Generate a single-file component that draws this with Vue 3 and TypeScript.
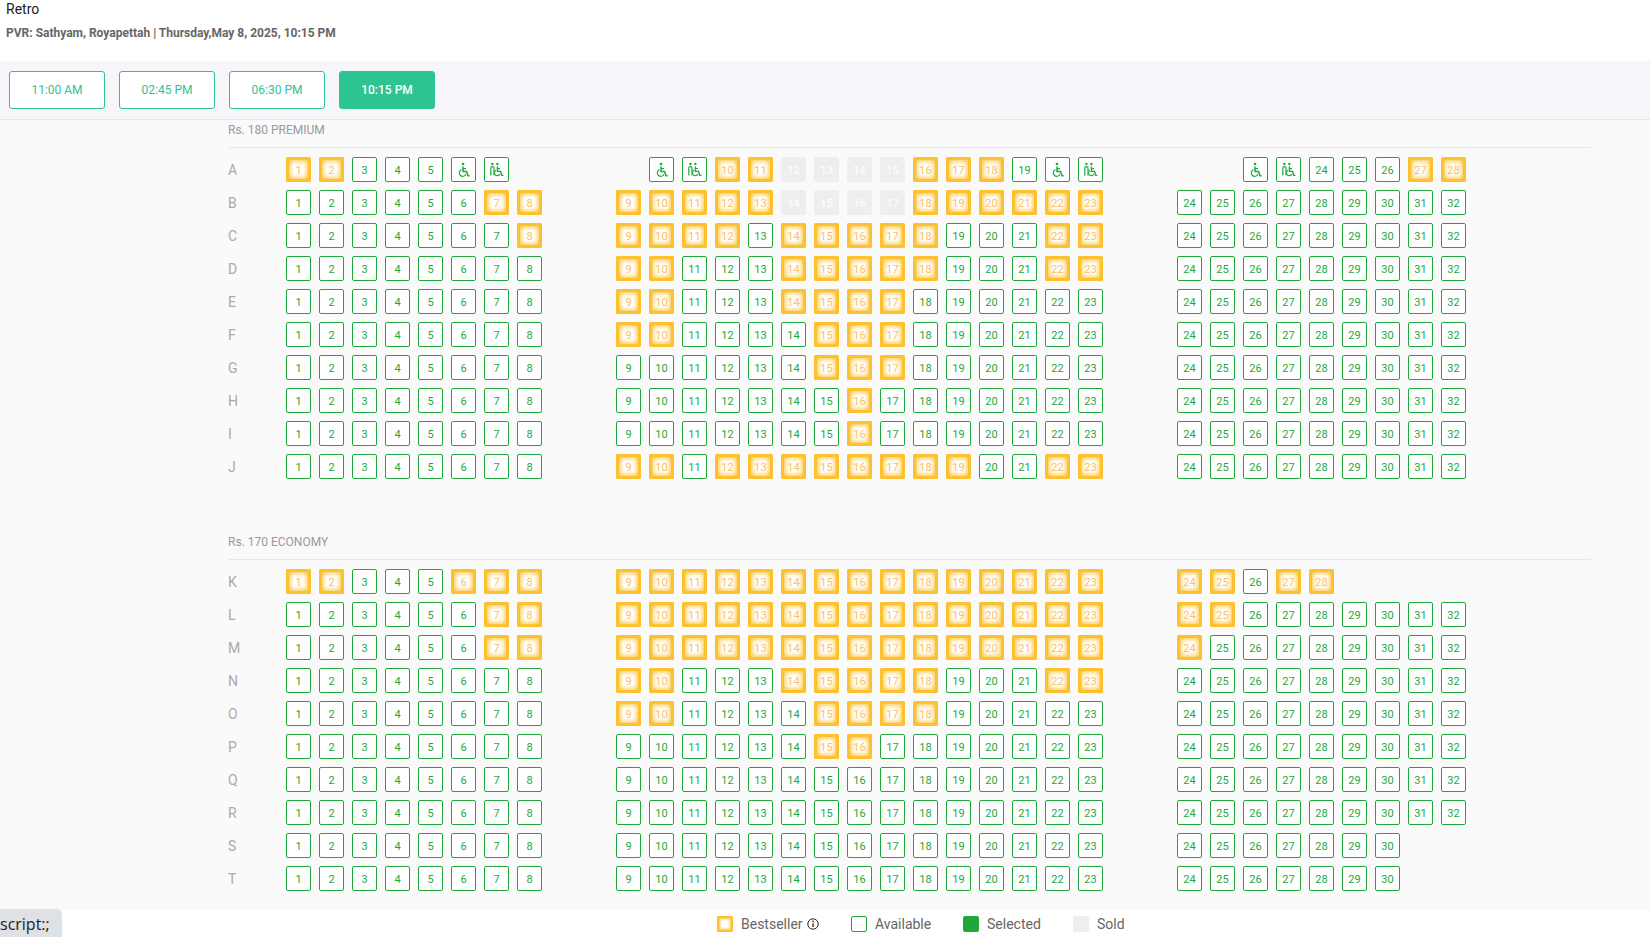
<script setup lang="ts">
type SeatKind = 'available' | 'best' | 'sold' | 'wheel' | 'companion' | 'gap'

interface Seat {
  label: string
  kind: SeatKind
}

interface Row {
  name: string
  blocks: Seat[][]
}

// inclusive [from, to] ranges of seat numbers
type Ranges = [number, number][]

interface RowSpec {
  name: string
  best?: Ranges
  sold?: Ranges
  last?: number
}

const times = ['11:00 AM', '02:45 PM', '06:30 PM', '10:15 PM']

function inRanges(n: number, ranges: Ranges = []) {
  return ranges.some(([a, b]) => n >= a && n <= b)
}

function splitBlocks(seats: Seat[]): Seat[][] {
  return [seats.slice(0, 8), seats.slice(8, 23), seats.slice(23)]
}

function buildRow(spec: RowSpec): Row {
  const seats: Seat[] = []
  const last = spec.last ?? 32
  for (let n = 1; n <= last; n++) {
    let kind: SeatKind = 'available'
    if (inRanges(n, spec.best)) kind = 'best'
    if (inRanges(n, spec.sold)) kind = 'sold'
    seats.push({ label: String(n), kind })
  }
  return { name: spec.name, blocks: splitBlocks(seats) }
}

// row A has wheelchair bays, so its numbers do not follow the column position
function buildRowA(): Row {
  const b = (n: number): Seat => ({ label: String(n), kind: 'best' })
  const a = (n: number): Seat => ({ label: String(n), kind: 'available' })
  const s = (n: number): Seat => ({ label: String(n), kind: 'sold' })
  const gap: Seat = { label: '', kind: 'gap' }
  const wheel: Seat = { label: '', kind: 'wheel' }
  const comp: Seat = { label: '', kind: 'companion' }
  const seats = [
    b(1), b(2), a(3), a(4), a(5), wheel, comp, gap,
    gap, wheel, comp, b(10), b(11), s(12), s(13), s(14), s(15), b(16), b(17), b(18), a(19), wheel, comp,
    gap, gap, wheel, comp, a(24), a(25), a(26), b(27), b(28)
  ]
  return { name: 'A', blocks: splitBlocks(seats) }
}

const premium: Row[] = [
  buildRowA(),
  buildRow({ name: 'B', best: [[7, 13], [18, 23]], sold: [[14, 17]] }),
  buildRow({ name: 'C', best: [[8, 12], [14, 18], [22, 23]] }),
  buildRow({ name: 'D', best: [[9, 10], [14, 18], [22, 23]] }),
  buildRow({ name: 'E', best: [[9, 10], [14, 17]] }),
  buildRow({ name: 'F', best: [[9, 10], [15, 17]] }),
  buildRow({ name: 'G', best: [[15, 17]] }),
  buildRow({ name: 'H', best: [[16, 16]] }),
  buildRow({ name: 'I', best: [[16, 16]] }),
  buildRow({ name: 'J', best: [[9, 10], [12, 19], [22, 23]] })
]

const economy: Row[] = [
  buildRow({ name: 'K', best: [[1, 2], [6, 25], [27, 28]], last: 28 }),
  buildRow({ name: 'L', best: [[7, 25]] }),
  buildRow({ name: 'M', best: [[7, 24]] }),
  buildRow({ name: 'N', best: [[9, 10], [14, 18], [22, 23]] }),
  buildRow({ name: 'O', best: [[9, 10], [15, 18]] }),
  buildRow({ name: 'P', best: [[15, 16]] }),
  buildRow({ name: 'Q' }),
  buildRow({ name: 'R' }),
  buildRow({ name: 'S', last: 30 }),
  buildRow({ name: 'T', last: 30 })
]

const sections = [
  { title: 'Rs. 180 PREMIUM', rows: premium },
  { title: 'Rs. 170 ECONOMY', rows: economy }
]
</script>

<template>
  <div class="page">
    <header class="head">
      <div class="movie">Retro</div>
      <div class="venue">PVR: Sathyam, Royapettah | Thursday,May 8, 2025, 10:15 PM</div>
    </header>

    <nav class="times">
      <button
        v-for="t in times"
        :key="t"
        class="time"
        :class="{ active: t === '10:15 PM' }"
      >
        {{ t }}
      </button>
    </nav>

    <main class="hall">
      <section v-for="sec in sections" :key="sec.title" class="section">
        <h3 class="title">{{ sec.title }}</h3>
        <div v-for="row in sec.rows" :key="row.name" class="row">
          <span class="letter">{{ row.name }}</span>
          <div class="blocks">
            <div v-for="(block, bi) in row.blocks" :key="bi" class="block">
              <div
                v-for="(seat, si) in block"
                :key="si"
                class="seat"
                :class="seat.kind"
              >
                <svg v-if="seat.kind === 'wheel'" class="ico" viewBox="0 0 14 16">
                  <circle cx="6" cy="2" r="1.3" fill="#1fa83c" />
                  <path d="M6 4.6V9.6H9.6L11 13.8H12.6" fill="none" stroke="#1fa83c" stroke-width="1.5" />
                  <path d="M6 6.6H9" fill="none" stroke="#1fa83c" stroke-width="1.2" />
                  <path d="M4.4 7.6A3.5 3.5 0 1 0 9 12.2" fill="none" stroke="#1fa83c" stroke-width="1.2" />
                </svg>
                <svg v-else-if="seat.kind === 'companion'" class="ico" viewBox="0 0 14 16">
                  <circle cx="2.4" cy="2" r="1.2" fill="#1fa83c" />
                  <path d="M0.8 13.6V6Q0.8 4.6 2.4 4.6Q4 4.6 4 6V13.6" fill="none" stroke="#1fa83c" stroke-width="1.2" />
                  <circle cx="7.4" cy="2" r="1.2" fill="#1fa83c" />
                  <path d="M7.4 4.6V9.4H10.6L11.8 13.4H13.4" fill="none" stroke="#1fa83c" stroke-width="1.4" />
                  <path d="M7.4 6.6H10" fill="none" stroke="#1fa83c" stroke-width="1.1" />
                  <path d="M6 8.2A2.9 2.9 0 1 0 10 12" fill="none" stroke="#1fa83c" stroke-width="1.1" />
                </svg>
                <span v-else>{{ seat.label }}</span>
              </div>
            </div>
          </div>
        </div>
      </section>
    </main>

    <footer class="legend">
      <div class="key key-best">
        <i class="swatch best"></i>
        <span>Bestseller</span>
        <svg class="info" viewBox="0 0 12 12">
          <circle cx="6" cy="6" r="5.2" fill="none" stroke="#222" stroke-width="1" />
          <circle cx="6" cy="3.4" r="0.8" fill="#222" />
          <path d="M6 5.2V9" stroke="#222" stroke-width="1.3" />
        </svg>
      </div>
      <div class="key key-available"><i class="swatch available"></i><span>Available</span></div>
      <div class="key key-selected"><i class="swatch selected"></i><span>Selected</span></div>
      <div class="key"><i class="swatch sold"></i><span>Sold</span></div>
    </footer>

    <div class="status">script:;</div>
  </div>
</template>

<style>
html,
body {
  margin: 0;
  height: 100%;
  overflow: hidden;
  background: #fff;
}
</style>

<style scoped>
.page {
  position: relative;
  display: flex;
  flex-direction: column;
  height: 937px;
  font-family: Roboto, "Liberation Sans", sans-serif;
  background: #fff;
}

.head {
  height: 61px;
  box-sizing: border-box;
  padding: 0 6px;
}
.movie {
  font-size: 14px;
  line-height: 18px;
  color: #222;
}
.venue {
  margin-top: 7px;
  font-size: 12px;
  line-height: 16px;
  font-weight: 700;
  color: #666;
}

.times {
  display: flex;
  gap: 14px;
  height: 59px;
  box-sizing: border-box;
  padding: 10px 9px 0;
  background: #f5f5fa;
  border-bottom: 1px solid #e5e5e5;
}
.time {
  width: 96px;
  height: 38px;
  padding: 0;
  border: 1px solid #2dc492;
  border-radius: 3px;
  background: #fff;
  color: #2dc492;
  font-family: inherit;
  font-size: 12px;
}
.time.active {
  background: #2dc492;
  color: #fff;
  font-weight: 500;
}

.hall {
  height: 790px;
  box-sizing: border-box;
  padding-left: 228px;
  background: #fafafa;
}
.section {
  width: 1363px;
  margin-bottom: 53px;
}
.title {
  margin: 0 0 9px;
  height: 28px;
  box-sizing: border-box;
  border-bottom: 1px solid #e8e8e8;
  font-size: 12px;
  font-weight: 400;
  line-height: 20px;
  color: #999;
}

.row {
  display: flex;
  align-items: center;
  height: 25px;
  margin-bottom: 8px;
}
.letter {
  width: 58px;
  font-size: 14px;
  color: #aaa;
}
.blocks {
  display: flex;
  gap: 74px;
}
.block {
  display: flex;
  gap: 8px;
}

.seat {
  width: 25px;
  height: 25px;
  box-sizing: border-box;
  display: flex;
  align-items: center;
  justify-content: center;
  padding-top: 1px;
  border-radius: 2px;
  font-size: 11px;
}
.seat.available,
.seat.wheel,
.seat.companion {
  background: #fff;
  border: 1px solid #1ea83c;
  color: #1ea83c;
}
.seat.best {
  background: #fff;
  box-shadow: inset 0 0 0 3px #fdc02f, inset 0 0 5px 4px #fdc02f;
  color: #fcbf63;
}
.seat.sold {
  background: #eee;
  color: #fff;
}
.seat.gap {
  visibility: hidden;
}
.ico {
  width: 14px;
  height: 16px;
}

.legend {
  display: flex;
  align-items: center;
  height: 27px;
  padding-left: 717px;
  font-size: 14px;
  color: #666;
}
.key {
  display: flex;
  align-items: center;
  gap: 8px;
}
.key-best {
  width: 134px;
}
.key-available {
  width: 112px;
}
.key-selected {
  width: 110px;
}
.swatch {
  display: block;
  width: 16px;
  height: 16px;
  box-sizing: border-box;
  border-radius: 2px;
}
.swatch.best {
  background: #fff;
  box-shadow: inset 0 0 0 2px #fdc02f, inset 0 0 3px 3px #fdc02f;
}
.swatch.available {
  background: #fff;
  border: 1px solid #1ea83c;
}
.swatch.selected {
  background: #1ea83c;
}
.swatch.sold {
  background: #eee;
}
.info {
  width: 12px;
  height: 12px;
  margin-left: -4px;
}

.status {
  position: absolute;
  left: 0;
  bottom: 0;
  height: 28px;
  width: 62px;
  border-top-right-radius: 5px;
  background: #dfe1e5;
  color: #222;
  font-family: "Open Sans", sans-serif;
  font-size: 16px;
  line-height: 30px;
}
</style>
